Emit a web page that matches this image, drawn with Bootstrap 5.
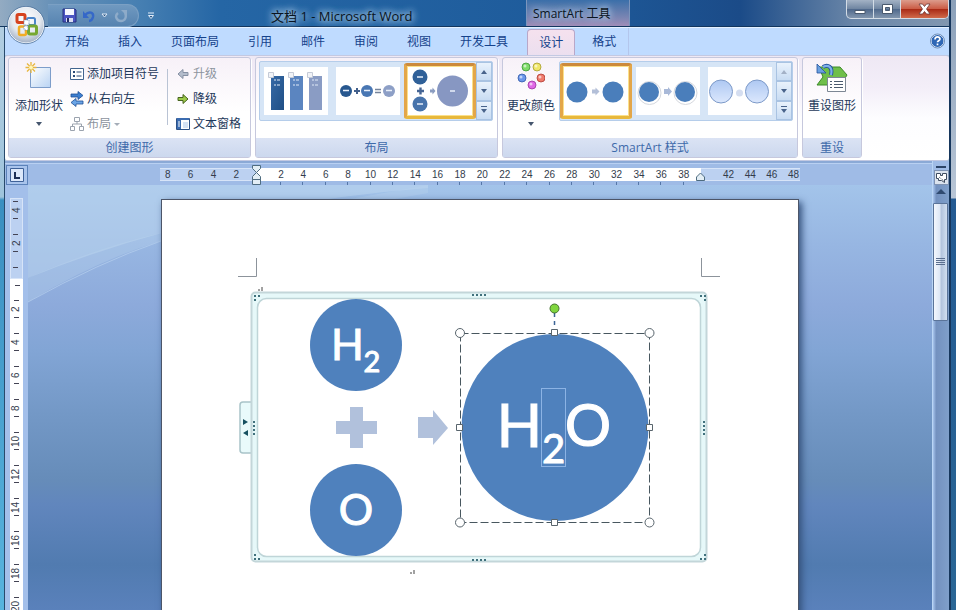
<!DOCTYPE html>
<html lang="zh-CN">
<head>
<meta charset="utf-8">
<meta name="viewport" content="width=device-width, initial-scale=1">
<title>文档 1 - Microsoft Word</title>
<link href="https://cdn.jsdelivr.net/npm/bootstrap@5.3.0/dist/css/bootstrap.min.css" rel="stylesheet">
<style>
body{font-family:"Open Sans","Noto Sans CJK SC",sans-serif;font-size:12px;line-height:16px;color:#1e395b;background:linear-gradient(#b4cfe2 0,#9fc4dc 197px,#3a8fc0 200px,#58b4de 100%)}
button{font:inherit;color:inherit;background:none;border:0;padding:0;white-space:nowrap}
svg{display:block;flex:none}
.desk-right{width:5px;background:linear-gradient(#8ba0b9 0,#b9c6d6 198px,#245a92 199px,#2a6695 100%)}
.app{border-left:1px solid #284a6c;border-right:2px solid #16365c;margin-left:4px;min-width:0}
.titlebar{height:27px;margin-left:-5px;background:linear-gradient(90deg,#93abc2 0,#6992b8 50px,#467fb2 140px,#2566a5 220px,#1e5b9b 60%,#1b4b88 78%,#6a86a8 90%,#8197b0 100%);border-bottom:1px solid #12365f}
.orb{position:absolute;left:1px;top:6px;z-index:3}
.qat{height:23px;margin-left:44px;padding:0 10px 0 14px;gap:6px;border:1px solid #7ba0c4;border-left:0;border-radius:0 12px 12px 0;background:linear-gradient(#7099c0,#5683b0)}
.doc-title{font-size:13px;margin-left:116px;color:#0a1420;text-shadow:0 0 6px #b9d6ee,0 0 8px #a5c8e6,0 0 10px #a5c8e6}
.context-title{margin-left:auto;width:104px;height:26px;padding-left:6px;color:#0a1420;line-height:27px;background:linear-gradient(#3b6fa9,#7d86b3 70%,#a08db8);border:solid #7b95bd;border-width:0 1px;text-shadow:0 0 6px #b9d6ee,0 0 8px #b9d6ee}
.title-lead{width:630px;min-width:0}
.win-keys{height:19px;border:1px solid #d3dce6;border-top:0;border-radius:0 0 5px 5px;overflow:hidden;margin-right:0;background:linear-gradient(#a3b2c5,#6e84a0 50%,#50698c 52%,#8296ae)}
.win-keys button{width:27px;border-right:1px solid #d3dce6}
.win-keys button:last-child{width:47px;border:0;background:linear-gradient(#dc9c8c,#cb5d46 48%,#a92b16 52%,#d06a4a)}
.tabs{height:28px;padding-left:48px;gap:5px;background:#bfdbff;border-top:1px solid #e5f1ff;color:#15428b}
.tabs .tab-key{padding:0 12px;height:28px}
.tabs .context-first{margin-left:2px}
.tabs .context-last{border-right:1px solid #b3c6ec}
.tabs .tab-on{height:27px;margin-top:1px;background:linear-gradient(#f5e1ee,#ebdfef);border:1px solid #b9a7c8;border-bottom:0;border-radius:4px 4px 0 0;padding:0 11px}
.help-key{margin:4px 4px 0 0}
.ribbon{padding:1px 3px 2px;gap:4px;background:linear-gradient(#eee8f4,#f3eef8 30%,#fdfdff 60%,#fff);border:1px solid #c3c9e2;border-width:1px 0 1px 0;border-radius:3px}
.rgroup{border:1px solid #c6c8dd;border-radius:3px;background:linear-gradient(#f7f1f8,#fff 55%);box-shadow:1px 1px 0 #fff}
.rgroup-body{height:80px;padding:3px 2px 0}
.rgroup-body.holds-gallery{padding:3px 4px 0 3px}
.rgroup-body.one-key{padding:3px 1px 0}
.rgroup-name{height:19px;line-height:19px;background:linear-gradient(#dbe3f4,#ccd8ee);color:#3e6aaa}
.big-key{width:56px;height:72px}
.big-key .ico{height:34px;margin:1px 0 2px}
.small-key{height:25px;gap:3px;padding:0 3px}
.small-key svg{width:14px;height:16px}
.off{color:#8d949e}
.split{width:1px;height:56px;background:#b9c3d4;margin:8px 5px 0 5px}
.gallery{border:1px solid #b5cdea;border-radius:2px;background:#d6e5f6;padding:1px 0}
.gallery .pick{width:72px;height:56px;padding:4px}
.gallery .pick svg{background:#fff}
.gallery .pick-on{padding:1px;border:3px solid #e2a040;border-color:#cc8a3c #e3a649 #e8b83c;border-radius:3px;background:#fbe08a}
.gallery .steps{width:16px;margin:-1px 0}
.gallery .steps button{flex:1;border:1px solid #a9c3e2;background:linear-gradient(#e9f2fc,#c8dcf3)}
.ruler-row{height:24px;background:#9fbbe6;border-top:2px solid #8ba9d6;box-shadow:inset 0 1px 0 #b9d0f2}
.tab-stop{width:22px;height:20px;margin:2px 0 0 1px;border:1px solid #5c83ba;background:#a9c4ec}
.hruler{font:10px/11px "Liberation Sans",Arial,sans-serif;color:#333c4c;width:640px;margin-top:5px;height:13px;position:relative}
.hruler span{text-align:center}
.edge{background:#bcd1f1;border:1px solid #d7e4f8;border-width:1px 0}
.edge-left{width:97px;padding:0 18px 0 5px}
.edge-right{width:99px;padding:0 1px 0 22px}
.scale{background:#fff;padding:1px 6px 0 13px}
.scale span{width:22px;position:relative}
.scale span::after{content:"";position:absolute;left:10px;top:13px;width:1px;height:3px;background:#5577a8}
.indent{position:absolute;top:-3px;left:92px}
.indent-end{position:absolute;top:4px;left:536px}
.vside{width:23px;background:#a3bfea;padding:13px 5px 0 5px}
.vruler{font:10px/12px "Liberation Sans",Arial,sans-serif;color:#333c4c;width:13px}
.vruler .mg{background:#bcd1f1;border:1px solid #d7e4f8;height:81px}
.vruler .bd{background:#fff;padding-top:14px;background-image:linear-gradient(#445,#445);background-size:5px 1px;background-repeat:no-repeat;background-position:5px 6px}
.vcell{height:33px;flex:none;writing-mode:vertical-rl;transform:rotate(180deg);text-align:center;background:linear-gradient(#445,#445) 4px 8px/5px 1px no-repeat,linear-gradient(#445,#445) 4px 25px/5px 1px no-repeat}
.vcell-cut{margin-top:-5px}
.desk{background:linear-gradient(#a3c4ea 0,#97b6e2 60px,#8daadb 120px,#82a5d5 165px,#7398c6 230px,#668cb9 295px,#6186bd 320px,#517bb0 380px,#5a81bb 425px);padding-top:14px;position:relative;overflow:hidden}
.swoosh{position:absolute;left:0;top:0}
.sheet{width:638px;min-height:800px;margin:0 auto;background:#fff;border:1px solid #4c5568;box-shadow:3px 3px 7px #34517c;position:relative;padding:56px 0 0 75px}
.diagram{font-family:Lato,"Open Sans",sans-serif;fill:#fff}
.diagram text{stroke:#fff;stroke-width:1px}
.vbar{width:17px;background:linear-gradient(90deg,#a9c6ee,#7391bf 20%,#7f9fca);border-left:1px solid #b9d5f5}
.vbar .vtop{background:#9fbbe6;height:24px}
.vbar .view-key{width:15px;height:15px;border:1px solid #7f93b3;background:#dbe3ee}
.vbar .thumb{width:15px;height:118px;border:1px solid #5b7499;border-radius:1px;background:linear-gradient(90deg,#f3f7fd,#dde7f5 45%,#b3c3dc 55%,#d2dff0)}
</style>
<script src="https://cdn.jsdelivr.net/npm/bootstrap@5.3.0/dist/js/bootstrap.bundle.min.js"></script>
</head>
<body class="vh-100 overflow-hidden d-flex">
<div class="app flex-grow-1 d-flex flex-column position-relative">
  <header class="titlebar d-flex align-items-start flex-shrink-0">
    <div class="title-lead d-flex align-items-start">
    <div class="qat d-flex align-items-center mt-1 ms-5">
      <button aria-label="保存"><svg width="15" height="15" viewBox="0 0 15 15"><path d="M1 1h12l1 1v12H1z" fill="#4b55c2" stroke="#27307f"/><path d="M3 1h9v6H3z" fill="#f6f8ff"/><path d="M4 10h7v4H4z" fill="#d8dcf2"/><path d="M5 10h2v4H5z" fill="#222a66"/></svg></button>
      <button aria-label="撤消"><svg width="12" height="14" viewBox="0 0 12 14"><path d="M2 6C6 2 11 3 10 8c-.5 2-2 4-4 4" fill="none" stroke="#3568c8" stroke-width="2.4"/><path d="M0 2v7h6z" fill="#3568c8"/></svg></button>
      <button aria-label="撤消选项"><svg width="7" height="5" viewBox="0 0 7 5"><path d="M1 1h5L3.500 4z" fill="#2b5686" stroke="#e1ecf8"/></svg></button>
      <button aria-label="重复"><svg width="14" height="14" viewBox="0 0 14 14"><path d="M4 4C0 7 3 12 7 12s6-4 4-8" fill="none" stroke="#8eabc9" stroke-width="2.400"/><path d="M7 1h6v6z" fill="#8eabc9"/></svg></button>
    </div>
    <button class="ms-2 mt-2 pt-1" aria-label="自定义快速访问工具栏"><svg width="8" height="8" viewBox="0 0 8 8"><path d="M1 1h6M1.500 3.500h5L4 6.500z" fill="#2b5686" stroke="#e1ecf8"/></svg></button>
    <div class="doc-title text-nowrap pt-1 mt-1 flex-shrink-0">文档 1 - Microsoft Word</div>
    <div class="context-title text-nowrap">SmartArt 工具</div>
    </div>
    <div class="win-keys d-flex ms-auto">
      <button aria-label="最小化"><svg class="mx-auto" width="12" height="12"><path d="M1 7.500h10v3H1z" fill="#fff" stroke="#49596e"/></svg></button>
      <button aria-label="还原"><svg class="mx-auto" width="13" height="12"><path d="M1.500 1.500h10v9h-10zM4.500 4.500h4v3h-4z" fill="#fff" fill-rule="evenodd" stroke="#49596e"/></svg></button>
      <button aria-label="关闭"><svg class="mx-auto" width="13" height="12" viewBox="0 0 13 12"><path d="M1 1h3.500l2 2.500 2-2.500H12L8.500 6l3.500 5H8.500l-2-2.500-2 2.500H1L4.500 6z" fill="#fff" stroke="#6b3a3a" stroke-width=".8"/></svg></button>
    </div>
  </header>
  <button class="orb" aria-label="Office 按钮">
    <svg width="40" height="40" viewBox="0 0 40 40"><defs><radialGradient id="og" cx=".5" cy=".35" r=".65"><stop offset="0" stop-color="#fff"/><stop offset=".6" stop-color="#e4e9ef"/><stop offset="1" stop-color="#a2b0c4"/></radialGradient></defs>
    <circle cx="20" cy="19" r="18" fill="url(#og)" stroke="#f5f9fd"/><circle cx="20" cy="19" r="18.700" fill="none" stroke="#50749c" stroke-width=".8"/>
    <g fill="none" stroke-width="3"><rect x="11" y="8.500" width="8" height="8" rx="1.500" stroke="#d6431f"/><rect x="21" y="12" width="8" height="7" rx="1.500" stroke="#4b86c9" stroke-width="2"/><rect x="13" y="20.500" width="7" height="8.500" rx="1.500" stroke="#f0ad27" stroke-width="2.500"/><rect x="22.500" y="20" width="8" height="8" rx="1.500" stroke="#76a832"/></g>
    <path d="M18 14h5v5h-5zM18 20h4v4h-4z" fill="#fff" stroke="#6c8fb8" stroke-width=".8" stroke-dasharray="1.500 1"/></svg>
  </button>
  <nav class="tabs d-flex flex-shrink-0" aria-label="功能区选项卡">
    <button class="tab-key">开始</button><button class="tab-key">插入</button><button class="tab-key">页面布局</button><button class="tab-key">引用</button><button class="tab-key">邮件</button><button class="tab-key">审阅</button><button class="tab-key">视图</button><button class="tab-key">开发工具</button>
    <button class="tab-key tab-on context-first">设计</button><button class="tab-key context-last">格式</button>
    <button class="help-key ms-auto align-self-start" aria-label="帮助"><svg width="15" height="18" viewBox="0 0 15 18"><circle cx="7.500" cy="9" r="6.500" fill="#2f67b5" stroke="#f5faff"/><circle cx="7.500" cy="9" r="7" fill="none" stroke="#44699c" stroke-width=".7"/><path d="M5 7.500c0-3.500 5-3.200 5-.5 0 1.800-2.500 1.700-2.500 3.300M7.500 11.500v1.700" fill="none" stroke="#fff" stroke-width="1.700"/></svg></button>
  </nav>

  <div class="ribbon d-flex flex-shrink-0">
    <section class="rgroup" aria-label="创建图形">
      <div class="rgroup-body d-flex">
        <button class="big-key d-flex flex-column align-items-center">
          <span class="ico"><svg width="28" height="30" viewBox="0 0 28 30"><defs><linearGradient id="sq" x1="0" y1="0" x2="1" y2="1"><stop offset="0" stop-color="#fff"/><stop offset="1" stop-color="#b9d3f3"/></linearGradient></defs><path d="M5.500 5.500h20v20h-20z" fill="url(#sq)" stroke="#7d9dca"/><path d="M6 0v11M.5 5.500h11M2 1.500l8 8M10 1.500l-8 8" stroke="#e8b63e" stroke-width="1.300"/><circle cx="6" cy="5.500" r="2" fill="#fff6b5"/></svg></span>
          添加形状
          <svg class="mt-2" width="6" height="4"><path d="M0 0h6L3 4z" fill="#45566e"/></svg>
        </button>
        <div class="d-flex flex-column">
          <button class="small-key d-flex align-items-center"><svg viewBox="0 0 14 16"><path d="M.5 2.500h13v11H.5z" fill="#fff" stroke="#41648f"/><path d="M3 5h2v2H3zM3 9h2v2H3z" fill="#2a4a78"/><path d="M6.500 6h5M6.500 10h5" stroke="#2a4a78"/></svg>添加项目符号</button>
          <button class="small-key d-flex align-items-center"><svg viewBox="0 0 14 16"><path d="M1 3h7V0.500l5 4-5 4V6H1z" fill="#3c7fd0" stroke="#1e4f96" stroke-width=".8"/><path d="M13 10H6V7.500l-5 4 5 4V13h7z" fill="#6aa4e6" stroke="#1e4f96" stroke-width=".8"/></svg>从右向左</button>
          <button class="small-key d-flex align-items-center off"><svg viewBox="0 0 14 16"><path d="M4.500 1.500h5v4h-5zM.5 10.500h4v4h-4zM9.500 10.500h4v4h-4zM7 5.500V8M2.500 10.500V8h9v2.500" fill="none" stroke="#9ba3ae"/></svg>布局<svg style="width:6px" viewBox="0 0 6 16"><path d="M0 7h6L3 10z" fill="#a5adb8"/></svg></button>
        </div>
        <div class="split"></div>
        <div class="d-flex flex-column">
          <button class="small-key d-flex align-items-center off"><svg viewBox="0 0 14 16"><path d="M12 6.500H7V3.500L2 8l5 4.500v-3h5z" fill="#b3bccb" stroke="#8590a3"/></svg>升级</button>
          <button class="small-key d-flex align-items-center"><svg viewBox="0 0 14 16"><path d="M2 6.500h5V3.500L12 8l-5 4.500v-3H2z" fill="#9bc94a" stroke="#47641f"/></svg>降级</button>
          <button class="small-key d-flex align-items-center"><svg viewBox="0 0 14 16"><path d="M.5 2.500h13v11H.5z" fill="#fff" stroke="#2c5186"/><path d="M1 2h12v2H1zM1 4h4v9H1z" fill="#3b6cb0"/><path d="M2 6h2M2 8h2M2 10h2" stroke="#fff"/><path d="M7 6h5v6H7z" fill="#d5e3f5"/></svg>文本窗格</button>
        </div>
        <div class="ps-1 me-n1"></div>
      </div>
      <div class="rgroup-name text-center">创建图形</div>
    </section>

    <section class="rgroup" aria-label="布局">
      <div class="rgroup-body holds-gallery d-flex align-items-start">
        <div class="gallery d-flex">
          <button class="pick" aria-label="水平项目符号列表"><svg width="64" height="48" viewBox="0 0 64 48"><defs><linearGradient id="b1" x2="1" y2="1"><stop offset="0" stop-color="#3669a6"/><stop offset="1" stop-color="#1f4f85"/></linearGradient></defs><path d="M7 9h13v34H7z" fill="url(#b1)"/><path d="M26 9h13v34H26z" fill="#5b85c0"/><path d="M45 9h13v34H45z" fill="#8a9cc4"/><path d="M10 13h2m1 0h3M10 18h2m1 0h3M29 13h2m1 0h3M29 18h2m1 0h3M48 13h2m1 0h3M48 18h2m1 0h3" stroke="#dfe9f7"/><path d="M4.500 5.500h5v5h-5zM24.500 5.500h5v5h-5zM43.500 5.500h5v5h-5z" fill="#f1f3f7" stroke="#c5cad6"/></svg></button>
          <button class="pick" aria-label="公式"><svg width="64" height="48" viewBox="0 0 64 48"><circle cx="10" cy="24" r="6" fill="#28588f"/><circle cx="31" cy="24" r="6" fill="#4977b3"/><circle cx="53" cy="24" r="6" fill="#8d9fc6"/><path d="M7 23.500h6M28 23.500h6M50 23.500h6" stroke="#e9f0fa" stroke-width="1.500"/><path d="M18 24h6M21 21v6" stroke="#425f8b" stroke-width="2"/><path d="M39 22.500h6M39 25.500h6" stroke="#75849c" stroke-width="1.500"/></svg></button>
          <button class="pick pick-on" aria-label="垂直公式"><svg width="64" height="48" viewBox="0 0 64 48"><circle cx="12" cy="10" r="7.500" fill="#2f6098"/><circle cx="12" cy="37" r="7.500" fill="#4773ab"/><circle cx="44.500" cy="24" r="15.500" fill="#8797c2"/><path d="M9 10h6M9 37h6M42 24h5" stroke="#e9f0fa" stroke-width="1.300"/><path d="M9 24h7M12.500 20.500v7" stroke="#466594" stroke-width="2.400"/><path d="M22 22.500h2.500v-2l3 3.500-3 3.500v-2H22z" fill="#8a9cc0"/></svg></button>
          <div class="steps d-flex flex-column"><button aria-label="上一行"><svg class="mx-auto" width="6" height="4"><path d="M0 4h6L3 0z" fill="#48638b"/></svg></button><button aria-label="下一行"><svg class="mx-auto" width="6" height="4"><path d="M0 0h6L3 4z" fill="#48638b"/></svg></button><button aria-label="其他布局"><svg class="mx-auto" width="6" height="8"><path d="M0 0h6v1H0zM0 3h6L3 7z" fill="#48638b"/></svg></button></div>
        </div>
      </div>
      <div class="rgroup-name text-center">布局</div>
    </section>

    <section class="rgroup" aria-label="SmartArt 样式">
      <div class="rgroup-body holds-gallery d-flex align-items-start ps-0">
        <button class="big-key d-flex flex-column align-items-center">
          <span class="ico"><svg width="28" height="28" viewBox="0 0 28 28"><g stroke-width=".8"><circle cx="9" cy="5" r="4" fill="#7fdc69" stroke="#3c9635"/><circle cx="20" cy="5" r="4" fill="#efe66a" stroke="#a69b2c"/><circle cx="5" cy="16" r="4" fill="#6b96ea" stroke="#3159a8"/><circle cx="24" cy="16" r="4" fill="#ef7a6d" stroke="#b03a31"/><circle cx="15" cy="23" r="4" fill="#e069e6" stroke="#9a33a0"/></g><g fill="#fff" opacity=".6"><circle cx="8" cy="4" r="1.500"/><circle cx="19" cy="4" r="1.500"/><circle cx="4" cy="15" r="1.500"/><circle cx="23" cy="15" r="1.500"/><circle cx="14" cy="22" r="1.500"/></g></svg></span>
          更改颜色
          <svg class="mt-2" width="6" height="4"><path d="M0 0h6L3 4z" fill="#45566e"/></svg>
        </button>
        <div class="gallery d-flex">
          <button class="pick pick-on" aria-label="简单填充"><svg width="64" height="48" viewBox="0 0 64 48"><circle cx="13" cy="25" r="10.500" fill="#4a7ebb"/><circle cx="49" cy="25" r="10.500" fill="#4a7ebb"/><path d="M28 22.500h3.500v-2l4 4-4 4v-2H28z" fill="#b3bfd8"/></svg></button>
          <button class="pick" aria-label="白色轮廓"><svg width="64" height="48" viewBox="0 0 64 48"><g fill="#fff" stroke="#d5d8de"><circle cx="13.500" cy="26" r="11.500"/><circle cx="49.500" cy="26" r="11.500"/></g><circle cx="13" cy="25" r="10" fill="#4a7ebb"/><circle cx="49" cy="25" r="10" fill="#4a7ebb"/><path d="M28 22h4v-2l4 4.500-4 4.500v-2h-4z" fill="#a9b9d8"/></svg></button>
          <button class="pick" aria-label="细微效果"><svg width="64" height="48" viewBox="0 0 64 48"><defs><linearGradient id="sb" x2="0" y2="1"><stop offset="0" stop-color="#aec8f2"/><stop offset="1" stop-color="#dce8fd"/></linearGradient></defs><circle cx="13" cy="24.500" r="11.500" fill="url(#sb)" stroke="#7d9ac8"/><circle cx="49" cy="24.500" r="11.500" fill="url(#sb)" stroke="#7d9ac8"/><circle cx="31.500" cy="26" r="3.500" fill="#d5def0"/></svg></button>
          <div class="steps d-flex flex-column"><button aria-label="上一行"><svg class="mx-auto" width="6" height="4"><path d="M0 4h6L3 0z" fill="#a3b1c6"/></svg></button><button aria-label="下一行"><svg class="mx-auto" width="6" height="4"><path d="M0 0h6L3 4z" fill="#48638b"/></svg></button><button aria-label="其他样式"><svg class="mx-auto" width="6" height="8"><path d="M0 0h6v1H0zM0 3h6L3 7z" fill="#48638b"/></svg></button></div>
        </div>
      </div>
      <div class="rgroup-name text-center">SmartArt 样式</div>
    </section>

    <section class="rgroup" aria-label="重设">
      <div class="rgroup-body one-key">
        <button class="big-key d-flex flex-column align-items-center">
          <span class="ico"><svg width="32" height="30" viewBox="0 0 32 30"><path d="M3 5h21l7 8-6 10H1l6-8z" fill="#6fbf4a" stroke="#3d8a29"/><path d="M11.500 15.500h18v14h-18z" fill="#fff" stroke="#7d8794"/><path d="M14 19.500h2m2 0h9M14 22.500h2m2 0h9M14 25.500h2m2 0h9" stroke="#4b5a6e"/><path d="M15 13C17 5 12 2 7 5" fill="none" stroke="#23529c" stroke-width="4"/><path d="M15 13C17 5 12 2 7 5" fill="none" stroke="#7fb0ea" stroke-width="2.200"/><path d="M1 2v9h9z" fill="#6aa0e0" stroke="#23529c" stroke-width=".8"/></svg></span>
          重设图形
        </button>
      </div>
      <div class="rgroup-name text-center">重设</div>
    </section>
  </div>

  <main class="d-flex flex-grow-1 overflow-hidden">
    <div class="flex-grow-1 d-flex flex-column overflow-hidden">
      <div class="ruler-row d-flex flex-shrink-0">
        <button class="tab-stop d-flex align-items-center justify-content-center" aria-label="左对齐制表符"><svg width="14" height="14"><path d="M.5.500h13v13H.5z" fill="#dce8fa" stroke="#3f6299"/><path d="M5 4v6h5" fill="none" stroke="#1c2f55" stroke-width="2"/></svg></button>
        <div class="hruler d-flex mx-auto">
          <div class="edge edge-left d-flex justify-content-between"><span>8</span><span>6</span><span>4</span><span>2</span></div>
          <div class="scale d-flex flex-grow-1 justify-content-between"><span>2</span><span>4</span><span>6</span><span>8</span><span>10</span><span>12</span><span>14</span><span>16</span><span>18</span><span>20</span><span>22</span><span>24</span><span>26</span><span>28</span><span>30</span><span>32</span><span>34</span><span>36</span><span>38</span></div>
          <div class="edge edge-right d-flex justify-content-between"><span>42</span><span>44</span><span>46</span><span>48</span></div>
          <svg class="indent" width="10" height="21" viewBox="0 0 10 21"><path d="M.5.500h8v3l-4 4-4-4zM4.500 7.500l4 4v3h-8v-3zM.5 14.500h8v5h-8z" fill="#e3eef5" stroke="#4f6c80"/></svg>
          <svg class="indent-end" width="10" height="10" viewBox="0 0 10 10"><path d="M.5 8.500V5l4-4 4 4v3.500z" fill="#e3eef5" stroke="#4f6c80"/></svg>
        </div>
      </div>
      <div class="d-flex flex-grow-1 overflow-hidden">
        <div class="vside flex-shrink-0">
          <div class="vruler d-flex flex-column">
            <div class="mg d-flex flex-column overflow-hidden"><div class="vcell vcell-cut">4</div><div class="vcell">2</div><div class="vcell"></div></div>
            <div class="bd d-flex flex-column"><div class="vcell">2</div><div class="vcell">4</div><div class="vcell">6</div><div class="vcell">8</div><div class="vcell">10</div><div class="vcell">12</div><div class="vcell">14</div><div class="vcell">16</div><div class="vcell">18</div><div class="vcell">20</div></div>
          </div>
        </div>
        <div class="desk flex-grow-1">
          <svg class="swoosh" width="400" height="120" viewBox="0 0 400 120"><path d="M0 0h400v3Q180 20 0 93z" fill="#bcd6ef" opacity=".55"/><path d="M0 93Q70 62 133 48L400 0v8L133 56Q70 75 0 117z" fill="#b9d3ee" opacity=".35"/><path d="M0 117Q70 78 133 56" fill="none" stroke="#b6d0ee" opacity=".7"/></svg>
          <article class="sheet">
            <svg class="diagram" width="484" height="322" viewBox="237 256 484 322" role="img" aria-label="H2 + O = H2O">
              <path d="M238 276.500h18.500V258M720 276.500h-18.500V258" fill="none" stroke="#8c939b"/>
              <path d="M262 287v4m-2-1h-2M414 570v4m-2-1h-2" fill="none" stroke="#444"/>
              <path d="M251 402h-8q-3 0-3 3v45q0 3 3 3h8" fill="#e9fafb" stroke="#a9c4c9" stroke-width="1.500"/>
              <path d="M243 419v6l5-3zM248 430v6l-5-3z" fill="#165060"/>
              <rect x="251.500" y="292.500" width="455" height="269" rx="4" fill="#e6f8f9" stroke="#c3d6d9" stroke-width="2"/>
              <rect x="257.500" y="298.500" width="443" height="258" rx="9" fill="#fff" stroke="#bfd5d8" stroke-width="1.500"/>
              <g fill="none" stroke="#40707c" stroke-width="2" stroke-dasharray="2 2"><path d="M472 295h14M472 560h14M254 421v14M704 421v14M254 296h6M254 300h2M700 296h6M704 300h2M254 559h6M254 555h2M700 559h6M704 555h2"/></g>
              <g fill="#4f81bd"><circle cx="356" cy="345" r="46"/><circle cx="356" cy="510" r="46"/><circle cx="555" cy="427.500" r="93.500"/></g>
              <path d="M350 407h13v14h14v13h-14v14h-13v-14h-14v-13h14zM418 417h15v-7l15 18-15 17v-7h-15z" fill="#b1c1dc"/>
              <text x="347.500" y="360" font-size="43" text-anchor="middle">H</text><text x="372" y="372" font-size="29" text-anchor="middle">2</text>
              <text x="356" y="525" font-size="43" text-anchor="middle">O</text>
              <text x="519.500" y="447" font-size="60" text-anchor="middle">H</text><text x="553.500" y="463" font-size="40" text-anchor="middle">2</text><text x="588" y="446" font-size="58" text-anchor="middle">O</text>
              <rect x="541.500" y="388.500" width="24" height="78" fill="none" stroke="#8cb3e4"/>
              <path d="M460.500 333.500h189v189h-189z" fill="none" stroke="#48575f" stroke-dasharray="8 3"/>
              <path d="M554.500 313v16" stroke="#3c6496" stroke-width="1.500" stroke-dasharray="4 4"/>
              <circle cx="554.500" cy="308.500" r="4.500" fill="#80d63f" stroke="#44712e"/>
              <g fill="#fff" stroke="#59656d"><circle cx="460" cy="333" r="4.500"/><circle cx="649.500" cy="333" r="4.500"/><circle cx="460" cy="522.500" r="4.500"/><circle cx="649.500" cy="522.500" r="4.500"/><path d="M551.500 329.500h6v6h-6zM551.500 519.500h6v6h-6zM456.500 424.500h6v6h-6zM646.500 424.500h6v6h-6z"/></g>
            </svg>
          </article>
        </div>
      </div>
    </div>
    <div class="vbar flex-shrink-0 d-flex flex-column">
      <div class="vtop d-flex flex-column align-items-center justify-content-end">
        <svg width="10" height="5"><path d="M0 1h10v2H0z" fill="#2c4468"/></svg>
        <button class="view-key" aria-label="标尺"><svg width="13" height="13" viewBox="0 0 13 13"><path d="M1.500 2.500h4v2h2v-2h4v6h-2v3l-3-2h-3v-2h-2z" fill="#fff" stroke="#3f4c60"/><path d="M4 6l5 4" stroke="#3f4c60" stroke-dasharray="1 1"/></svg></button>
      </div>
      <button class="py-1" aria-label="向上滚动"><svg class="mx-auto mb-1" width="10" height="6"><path d="M0 5h10L5 0z" fill="#2f4a70"/></svg></button>
      <button class="thumb d-flex align-items-center justify-content-center" aria-label="垂直滚动条"><svg width="9" height="8"><path d="M0 .5h9M0 2.500h9M0 4.500h9M0 6.500h9" stroke="#5b6f8f"/></svg></button>
    </div>
  </main>
</div>
<aside class="desk-right flex-shrink-0"></aside>
</body>
</html>
